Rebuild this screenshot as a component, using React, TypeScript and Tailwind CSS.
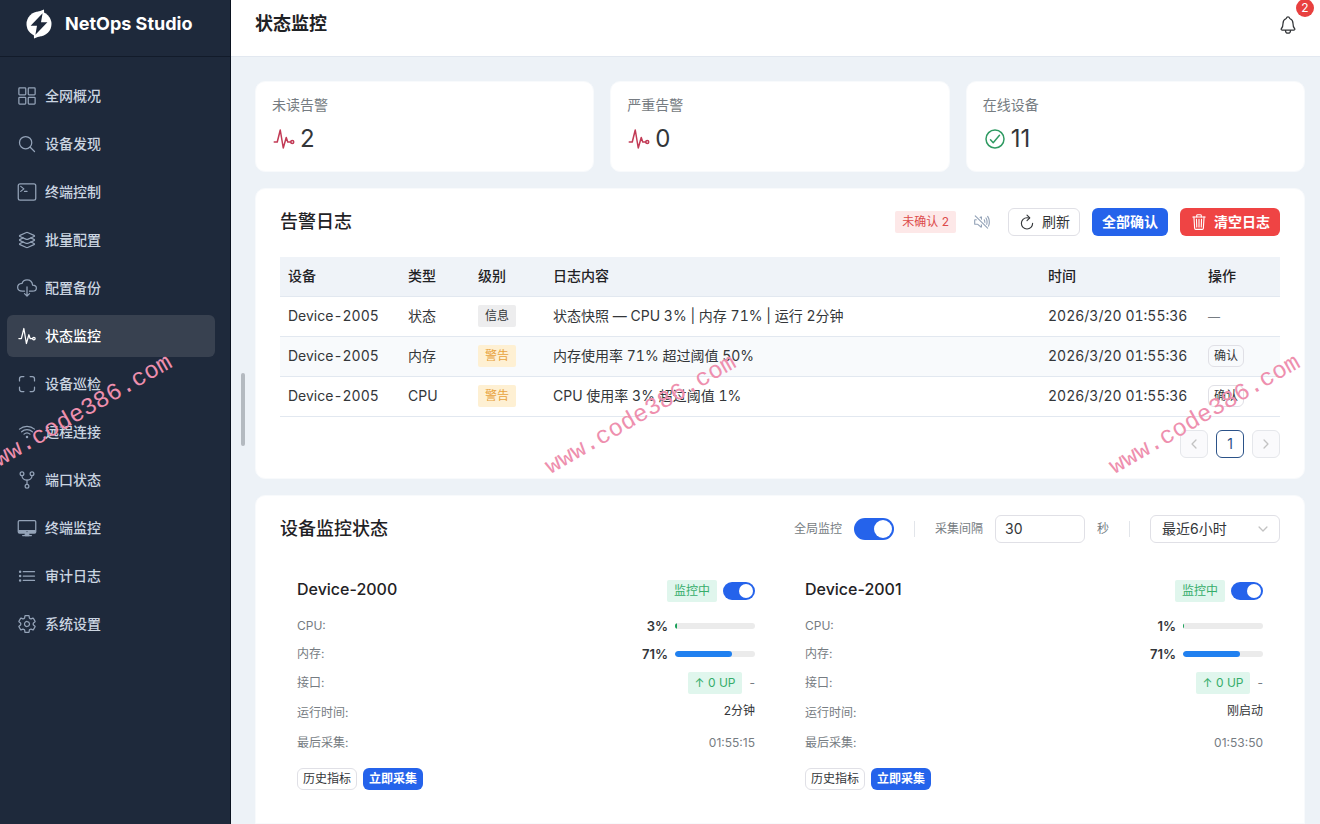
import type { ReactNode } from "react";
import type { IconType } from "react-icons";
import {
  IoCheckmarkCircleOutline,
  IoChevronBack,
  IoChevronDown,
  IoChevronForward,
  IoCloudDownloadOutline,
  IoDesktopOutline,
  IoGitNetworkOutline,
  IoGridOutline,
  IoLayersOutline,
  IoListOutline,
  IoNotificationsOutline,
  IoPulseOutline,
  IoRefreshOutline,
  IoScanOutline,
  IoSearchOutline,
  IoSettingsOutline,
  IoTerminalOutline,
  IoTrashOutline,
  IoVolumeMuteOutline,
  IoWifiOutline,
} from "react-icons/io5";

const menu: { label: string; icon: IconType; active?: boolean }[] = [
  { label: "全网概况", icon: IoGridOutline },
  { label: "设备发现", icon: IoSearchOutline },
  { label: "终端控制", icon: IoTerminalOutline },
  { label: "批量配置", icon: IoLayersOutline },
  { label: "配置备份", icon: IoCloudDownloadOutline },
  { label: "状态监控", icon: IoPulseOutline, active: true },
  { label: "设备巡检", icon: IoScanOutline },
  { label: "远程连接", icon: IoWifiOutline },
  { label: "端口状态", icon: IoGitNetworkOutline },
  { label: "终端监控", icon: IoDesktopOutline },
  { label: "审计日志", icon: IoListOutline },
  { label: "系统设置", icon: IoSettingsOutline },
];

const logs = [
  { device: "Device-2005", type: "状态", level: "信息", text: "状态快照 — CPU 3% | 内存 71% | 运行 2分钟", time: "2026/3/20 01:55:36" },
  { device: "Device-2005", type: "内存", level: "警告", text: "内存使用率 71% 超过阈值 50%", time: "2026/3/20 01:55:36" },
  { device: "Device-2005", type: "CPU", level: "警告", text: "CPU 使用率 3% 超过阈值 1%", time: "2026/3/20 01:55:36" },
];

const devices = [
  { name: "Device-2000", cpu: 3, memory: 71, uptime: "2分钟", last: "01:55:15" },
  { name: "Device-2001", cpu: 1, memory: 71, uptime: "刚启动", last: "01:53:50" },
];

function Logo() {
  return (
    <svg viewBox="0 0 28 30" className="h-[30px] w-7" aria-hidden="true">
      <circle cx="14" cy="15" r="12.5" fill="#fff" />
      <path d="M11.5 3.5 L19 0.4 L19.2 6 Z M16.5 26.5 L9 29.6 L8.8 24 Z" fill="#fff" />
      <path d="M17.6 4.2 L5.6 16.8 H12 L10.4 25.8 L22.4 13.2 H16 Z" fill="#1e293b" />
    </svg>
  );
}

function Sidebar() {
  return (
    <aside className="flex w-[231px] shrink-0 flex-col border-r border-[#0b1320] bg-[#1e293b]">
      <div className="flex h-[57px] items-center gap-3 border-b border-[#121b2a] pb-2 pl-[25px]">
        <Logo />
        <span className="text-lg font-bold text-white">NetOps Studio</span>
      </div>
      <nav className="pt-[18px] pr-[15px] pl-[7px]">
        <ul className="flex flex-col gap-1.5">
          {menu.map(({ label, icon: Icon, active }) => (
            <li key={label}>
              <a
                href="#"
                aria-current={active ? "page" : undefined}
                className={`flex h-[42px] items-center gap-2 rounded-md px-2.5 text-sm font-medium ${
                  active ? "bg-[#384150] text-white" : "text-[#cbd5e1]"
                }`}
              >
                <Icon className={`h-5 w-5 ${active ? "text-white" : "text-[#94a3b8]"}`} />
                {label}
              </a>
            </li>
          ))}
        </ul>
      </nav>
    </aside>
  );
}

function Header() {
  return (
    <header className="flex h-[57px] items-center justify-between border-b border-[#e2e8f0] bg-white pr-[22px] pb-2 pl-6">
      <h1 className="text-lg font-semibold text-[#1f2225]">状态监控</h1>
      <button type="button" aria-label="通知" className="relative mt-0.5 text-[#333639]">
        <IoNotificationsOutline className="h-5 w-5" />
        <span className="absolute -top-4 -right-4 flex h-[18px] w-[18px] items-center justify-center rounded-full bg-[#e8403f] text-xs text-white">
          2
        </span>
      </button>
    </header>
  );
}

function Stat({ label, value, icon }: { label: string; value: number; icon: ReactNode }) {
  return (
    <div className="rounded-[10px] border border-[#f8fafc] bg-white px-4 pt-[13px] pb-3">
      <div className="text-sm text-[#767c82]">{label}</div>
      <div className="mt-1 flex items-center gap-1 text-2xl leading-10 text-[#333639]">
        {icon}
        {value}
      </div>
    </div>
  );
}

function Tag({ className, children }: { className: string; children: ReactNode }) {
  return (
    <span className={`inline-flex h-[22px] items-center rounded-xs px-[7px] text-xs whitespace-nowrap ${className}`}>
      {children}
    </span>
  );
}

function AlarmLog() {
  return (
    <section className="rounded-[10px] border border-[#f8fafc] bg-white px-6 pt-[19px] pb-5">
      <div className="flex items-center justify-between">
        <h2 className="text-lg leading-7 font-medium text-[#1f2225]">告警日志</h2>
        <div className="flex items-center gap-3 text-sm">
          <Tag className="bg-[#fde8e8] text-[#dc4a4a]">未确认 2</Tag>
          <button type="button" aria-label="静音" className="flex h-7 w-7 items-center justify-center text-[#94a3b8]">
            <IoVolumeMuteOutline className="h-[18px] w-[18px]" />
          </button>
          <button type="button" className="flex h-7 items-center gap-1.5 rounded-md border border-[#e0e0e6] px-[9px] text-[#333639]">
            <IoRefreshOutline className="h-[18px] w-[18px]" />
            刷新
          </button>
          <button type="button" className="h-7 rounded-md bg-[#2563eb] px-2.5 font-semibold text-white">
            全部确认
          </button>
          <button type="button" className="flex h-7 items-center gap-1.5 rounded-md bg-[#ef4444] px-2.5 font-semibold text-white">
            <IoTrashOutline className="h-[18px] w-[18px]" />
            清空日志
          </button>
        </div>
      </div>

      <table className="mt-[21px] w-full table-fixed text-left text-sm text-[#333639] tabular-nums">
        <thead>
          <tr className="h-[39px] border-b border-[#e2e8f0] bg-[#eff3f8] text-[#1f2225]">
            <th className="w-[120px] px-2 font-medium">设备</th>
            <th className="w-[70px] px-2 font-medium">类型</th>
            <th className="w-[75px] px-2 font-medium">级别</th>
            <th className="px-2 font-medium">日志内容</th>
            <th className="w-[160px] px-2 font-medium">时间</th>
            <th className="w-20 px-2 font-medium">操作</th>
          </tr>
        </thead>
        <tbody>
          {logs.map((log) => (
            <tr key={log.text} className="h-10 border-b border-[#e2e8f0] even:bg-[#f8fafc]">
              <td className="px-2">{log.device}</td>
              <td className="px-2">{log.type}</td>
              <td className="px-2">
                <Tag className={log.level === "警告" ? "bg-[#fef0d3] text-[#e8a33d]" : "bg-[#ededee] text-[#333639]"}>
                  {log.level}
                </Tag>
              </td>
              <td className="px-2">{log.text}</td>
              <td className="px-2 whitespace-nowrap">{log.time}</td>
              <td className="px-2">
                {log.level === "警告" ? (
                  <button type="button" className="flex h-[22px] items-center rounded-md border border-[#e0e0e6] px-[5px] text-xs">
                    确认
                  </button>
                ) : (
                  <span className="text-xs text-[#767c82]">—</span>
                )}
              </td>
            </tr>
          ))}
        </tbody>
      </table>

      <div className="mt-[13px] flex justify-end gap-2 text-sm">
        <button type="button" disabled aria-label="上一页" className="flex h-7 w-7 items-center justify-center rounded-md border border-[#e5e7eb] bg-[#fafafc] text-[#c2c2c2]">
          <IoChevronBack className="h-3.5 w-3.5" />
        </button>
        <button type="button" className="h-7 w-7 rounded-md border border-[#2b5288] text-[#2b5288]">
          1
        </button>
        <button type="button" disabled aria-label="下一页" className="flex h-7 w-7 items-center justify-center rounded-md border border-[#e5e7eb] bg-[#fafafc] text-[#c2c2c2]">
          <IoChevronForward className="h-3.5 w-3.5" />
        </button>
      </div>
    </section>
  );
}

function Meter({ value, color }: { value: number; color: string }) {
  return (
    <div className="flex items-center gap-[7px] text-[13px] font-semibold text-[#333639]">
      {value}%
      <div className="h-1.5 w-20 overflow-hidden rounded-full bg-[#ebebeb]">
        <div className={`h-full rounded-full ${color}`} style={{ width: `${value}%` }} />
      </div>
    </div>
  );
}

function Row({ label, children }: { label: string; children: ReactNode }) {
  return (
    <div className="flex items-center justify-between">
      <span className="text-[#767c82]">{label}</span>
      {children}
    </div>
  );
}

function DeviceCard({ device }: { device: (typeof devices)[number] }) {
  return (
    <article className="px-[17px] py-4 text-xs leading-5 text-[#333639]">
      <div className="flex items-center justify-between">
        <h3 className="pb-0.5 text-base leading-5 font-medium text-[#1f2225]">{device.name}</h3>
        <div className="flex items-center gap-1.5 pt-0.5">
          <Tag className="bg-[#e0f6ed] text-[#36ad6a]">监控中</Tag>
          <input
            type="checkbox"
            role="switch"
            defaultChecked
            aria-label={`${device.name} 监控`}
            className="flex h-[18px] w-8 appearance-none items-center justify-end rounded-full bg-[#2563eb] px-0.5 before:h-3.5 before:w-3.5 before:rounded-full before:bg-white"
          />
        </div>
      </div>
      <div className="mt-3.5 flex flex-col gap-2">
        <Row label="CPU:">
          <Meter value={device.cpu} color="bg-[#18a058]" />
        </Row>
        <Row label="内存:">
          <Meter value={device.memory} color="bg-[#2080f0]" />
        </Row>
        <Row label="接口:">
          <div className="flex items-center gap-[7px]">
            <Tag className="bg-[#e0f6ed] text-[#36ad6a]">↑ 0 UP</Tag>
            <span className="text-[#767c82]">-</span>
          </div>
        </Row>
        <Row label="运行时间:">
          <span className="pb-1 leading-[18px]">{device.uptime}</span>
        </Row>
        <Row label="最后采集:">
          <span className="leading-[22px] text-[#767c82]">{device.last}</span>
        </Row>
      </div>
      <div className="mt-3.5 flex gap-1.5">
        <button type="button" className="flex h-[22px] items-center rounded-md border border-[#e0e0e6] px-[5px]">
          历史指标
        </button>
        <button type="button" className="flex h-[22px] items-center rounded-md bg-[#2563eb] px-1.5 font-semibold text-white">
          立即采集
        </button>
      </div>
    </article>
  );
}

function Monitor() {
  return (
    <section className="flex-1 rounded-t-[10px] border border-[#f8fafc] bg-white px-6 pt-[19px]">
      <div className="flex items-center justify-between">
        <h2 className="text-lg leading-7 font-medium text-[#1f2225]">设备监控状态</h2>
        <div className="flex items-center gap-3 text-xs text-[#767c82]">
          <label htmlFor="global">全局监控</label>
          <input
            id="global"
            type="checkbox"
            role="switch"
            defaultChecked
            className="flex h-[22px] w-10 appearance-none items-center justify-end rounded-full bg-[#2563eb] px-0.5 before:h-[18px] before:w-[18px] before:rounded-full before:bg-white"
          />
          <span className="mx-2 h-4 w-px bg-[#e2e5ea]" />
          <label htmlFor="interval">采集间隔</label>
          <input
            id="interval"
            type="text"
            defaultValue="30"
            className="h-7 w-[90px] rounded-md border border-[#e0e0e6] px-[9px] text-sm text-[#333639]"
          />
          <span>秒</span>
          <span className="mx-2 h-4 w-px bg-[#e2e5ea]" />
          <div className="relative">
            <select
              aria-label="时间范围"
              className="block h-7 w-[130px] appearance-none rounded-md border border-[#e0e0e6] bg-white px-[11px] text-sm text-[#333639]"
            >
              <option>最近6小时</option>
            </select>
            <IoChevronDown className="pointer-events-none absolute top-[7px] right-2.5 h-3.5 w-3.5 text-[#c2c2c2]" />
          </div>
        </div>
      </div>
      <div className="mt-[19px] grid grid-cols-2 gap-4">
        {devices.map((device) => (
          <DeviceCard key={device.name} device={device} />
        ))}
      </div>
    </section>
  );
}

function Watermark({ className }: { className: string }) {
  return (
    <span
      className={`absolute top-[415px] -translate-x-1/2 -translate-y-1/2 -rotate-30 font-['Liberation_Mono',monospace] text-2xl whitespace-nowrap text-[#ee8fae] ${className}`}
    >
      www.code386.com
    </span>
  );
}

export default function App() {
  return (
    <div className="relative flex h-screen overflow-hidden bg-[#edf2f7] font-['Inter','Noto_Sans_CJK_SC',sans-serif]">
      <Sidebar />
      <div className="flex min-w-0 flex-1 flex-col">
        <Header />
        <main className="relative flex flex-1 flex-col gap-4 pt-6 pr-[15px] pl-6">
          <div className="absolute top-[316px] left-2.5 h-[73px] w-1 rounded-full bg-[#b4bac0]" />
          <div className="grid grid-cols-3 gap-4">
            <Stat label="未读告警" value={2} icon={<IoPulseOutline className="h-6 w-6 text-[#c23a55]" />} />
            <Stat label="严重告警" value={0} icon={<IoPulseOutline className="h-6 w-6 text-[#c23a55]" />} />
            <Stat label="在线设备" value={11} icon={<IoCheckmarkCircleOutline className="h-6 w-6 text-[#2f9a62]" />} />
          </div>
          <AlarmLog />
          <Monitor />
        </main>
      </div>

      <div className="pointer-events-none absolute inset-0 overflow-hidden">
        <Watermark className="left-[77px]" />
        <Watermark className="left-[641px]" />
        <Watermark className="left-[1205px]" />
      </div>
    </div>
  );
}
